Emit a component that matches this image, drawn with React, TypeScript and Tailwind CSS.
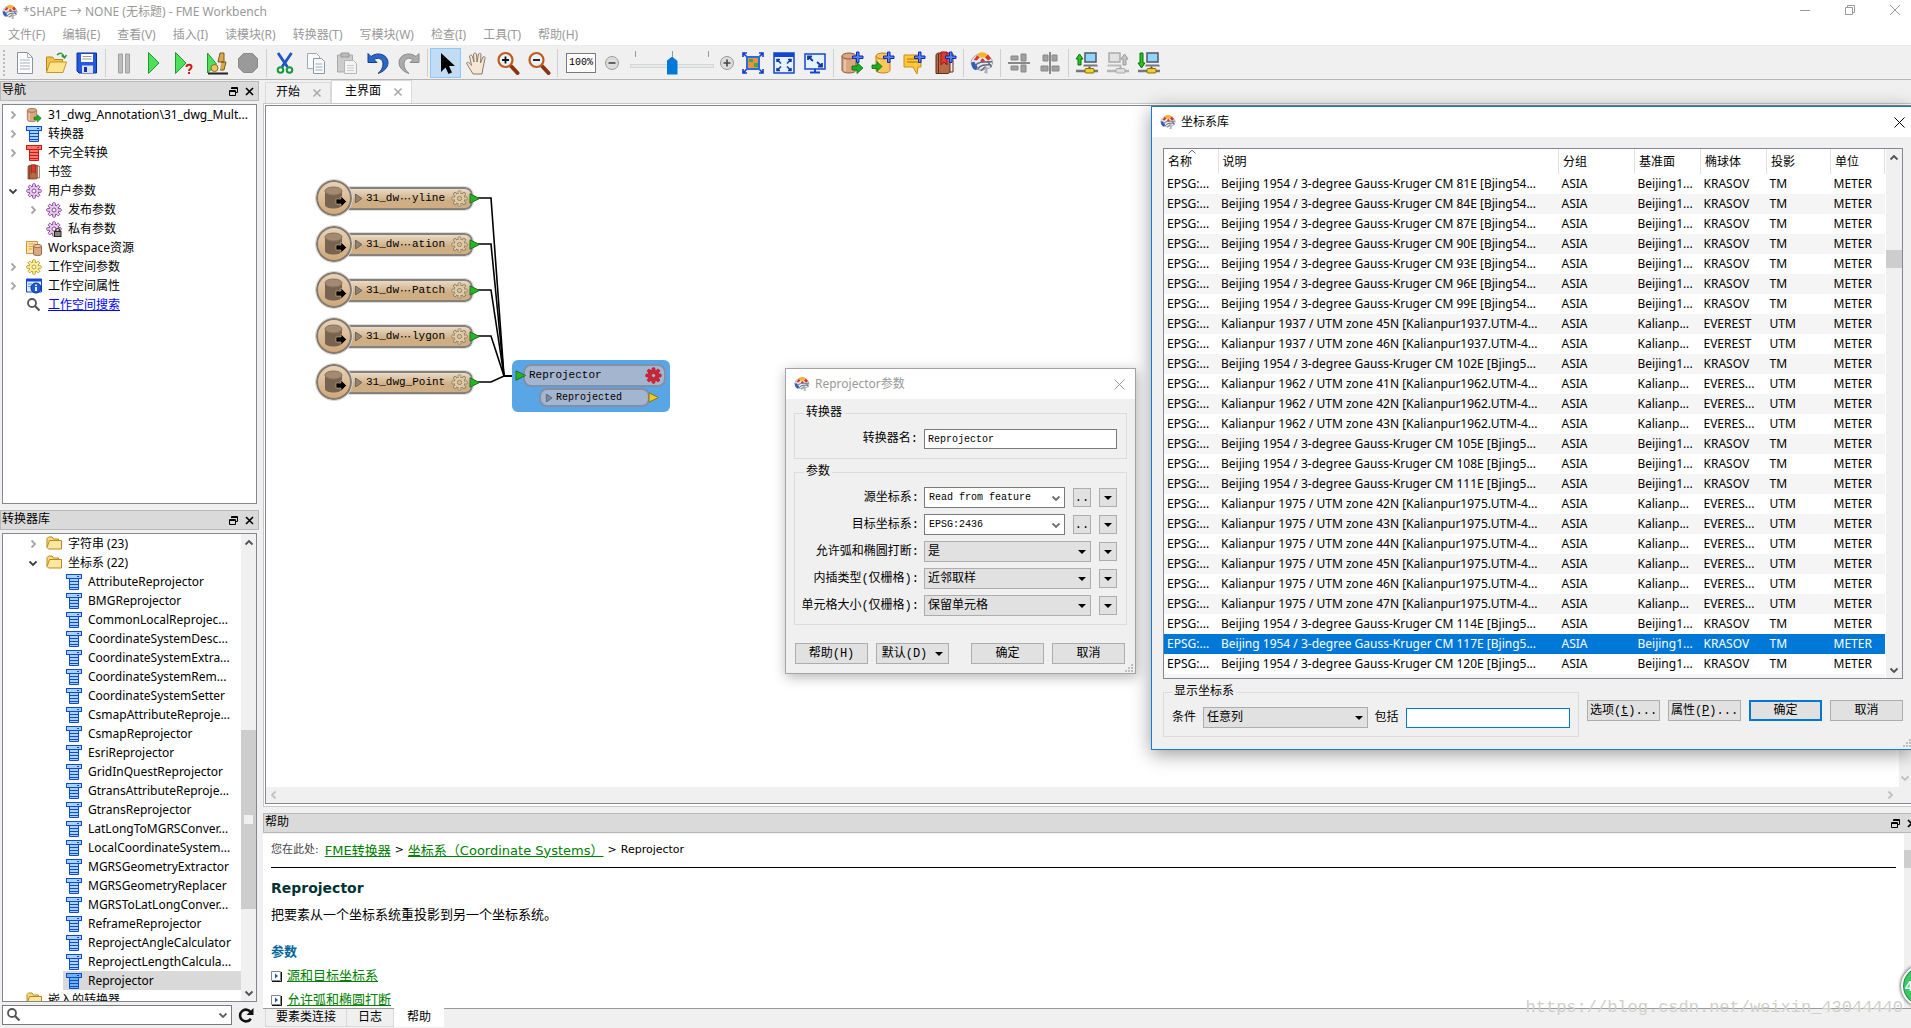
import type { ReactNode } from "react";
import clsx from "clsx";

const UI = "font-['Noto_Sans','Noto_Sans_CJK_SC',sans-serif]";
const SONG = "font-['Liberation_Mono','Noto_Sans_CJK_SC',monospace]";

/* ---------- icons ---------- */

interface SvgProps {
	size?: number;
	box?: number;
	children: ReactNode;
}

function Svg({ size = 24, box = 24, children }: SvgProps) {
	return (
		<svg
			width={size}
			height={size}
			viewBox={`0 0 ${box} ${box}`}
			fill="none"
			className="shrink-0"
			aria-hidden="true"
		>
			{children}
		</svg>
	);
}

function Logo({ size = 16 }: { size?: number }) {
	return (
		<Svg size={size} box={20}>
			<path d="M1 10C1 6 4 3 10 2C15 2.500 18.500 6 19 10L17 14L10 16L3 15Z" fill="#e6e9f1" stroke="#9a9ead" strokeWidth=".8" />
			<path d="M6 3C8 .5 12 .5 14.500 3L12.500 5.500H8Z" fill="#f5b52a" />
			<path d="M3 7.500L6 3.500L8 5.500L5.500 8Z" fill="#e03020" />
			<path d="M12.500 5.500L15 3L17.500 6.500L15 8Z" fill="#e03020" />
			<path d="M8.500 8L10.500 6L12.500 8L10.500 9.500Z" fill="#e03020" />
			<path d="M1 9.500C1 13 2.500 15 5 16L6.500 13.500L3.500 9Z" fill="#2c5fc4" />
			<path d="M4 12.500C7 8.500 11 9 18.500 9M6.500 15C9 11 13 11.500 17.500 11.500M9 16.500L13 13M15 9L18 13.500" stroke="#646878" strokeWidth="1.200" />
			<path d="M12 12.500L14.500 13.500V19L11.500 18L13 16Z" fill="#a9acb8" />
		</Svg>
	);
}

function Chevron({ dir, color = "#a6a6a6" }: { dir: "up" | "down" | "left" | "right"; color?: string }) {
	const d = {
		right: "M3.500 1.500L7 5L3.500 8.500",
		left: "M6.500 1.500L3 5L6.500 8.500",
		down: "M1.500 3.500L5 7L8.500 3.500",
		up: "M1.500 6.500L5 3L8.500 6.500",
	}[dir];
	return (
		<Svg size={10} box={10}>
			<path d={d} stroke={color} strokeWidth="1.800" />
		</Svg>
	);
}

interface GearProps {
	size?: number;
	fill: string;
	stroke: string;
	hole?: string;
	lock?: boolean;
}

function Gear({ size = 16, fill, stroke, hole = "#fff", lock }: GearProps) {
	return (
		<Svg size={size} box={16}>
			{[0, 45, 90, 135].map((a) => (
				<rect key={a} x="6.700" y=".8" width="2.600" height="14.400" rx=".6" fill={fill} stroke={stroke} strokeWidth=".9" transform={`rotate(${a} 8 8)`} />
			))}
			<circle cx="8" cy="8" r="5" fill={fill} stroke={stroke} strokeWidth=".9" />
			{[0, 45, 90, 135].map((a) => (
				<rect key={a} x="7.200" y="1.500" width="1.600" height="13" fill={fill} transform={`rotate(${a} 8 8)`} />
			))}
			<circle cx="8" cy="8" r="2" fill={hole} stroke={stroke} strokeWidth=".9" />
			{lock && (
				<>
					<path d="M9.800 11V9.500a2 2 0 0 1 4 0V11" stroke="#333" strokeWidth="1.200" />
					<rect x="8.500" y="10.500" width="6.500" height="5" fill="#8a8a70" stroke="#222" />
				</>
			)}
		</Svg>
	);
}

function TransformerIcon({ red, dim }: { red?: boolean; dim?: boolean }) {
	const line = red ? "#d3160c" : "#0a48e0";
	const fill = red ? "#f47a70" : dim ? "#6cb4ea" : "#a8d4fb";
	return (
		<Svg size={16} box={16}>
			<rect x=".5" y=".5" width="15" height="4" fill={fill} stroke={line} />
			<path d="M11 2.500h2" stroke={line} />
			<path d="M3.500 5v10.500h9V5" fill={fill} stroke={line} />
			<path d="M3 7.500h10M3 10.500h10M3 13.500h10" stroke={line} strokeWidth="1.200" />
		</Svg>
	);
}

function Folder() {
	return (
		<Svg size={16} box={16}>
			<path d="M1 11.500V2.500L2.500 1H6L7.500 3H12.500V5" fill="#f7dc86" stroke="#b98a1b" />
			<path d="M1 11.500L3.500 4.500H15.500V13H2.500Z" fill="#fbe7a0" stroke="#b98a1b" />
		</Svg>
	);
}

function Cylinder({ fill = "#d9a883", stroke = "#8a5a3c" }: { fill?: string; stroke?: string }) {
	return (
		<>
			<path d="M2 5v14c0 1.700 3 3 7 3s7-1.300 7-3V5" fill={fill} stroke={stroke} />
			<ellipse cx="9" cy="5" rx="7" ry="3" fill={fill} stroke={stroke} />
			<path d="M5 9v11" stroke="#fff" strokeOpacity=".35" strokeWidth="2" />
		</>
	);
}

const plus = <path d="M16.500 1h2.500v4h4v2.500h-4v4h-2.500v-4h-4V5h4z" fill="#5a86f0" stroke="#0a28b8" />;
const greenArrow = (
	<path d="M12 15h5v-3.500l6 5.500-6 5.500V19h-5z" fill="#1fae1f" stroke="#0c6b10" strokeWidth=".8" />
);

function Bookmark() {
	return (
		<>
			<path d="M3 3.500L5 2h12v19l-2 1.500H3Z" fill="#b56b45" stroke="#5f2d18" />
			<path d="M17 3h3v18h-3M5.500 3v19" stroke="#5f2d18" />
			<path d="M8 1h6v13l-3-3-3 3z" fill="#e03a30" stroke="#9a1510" />
		</>
	);
}

function Magnifier({ minus }: { minus?: boolean }) {
	return (
		<Svg>
			<path d="M15 15L21.500 22" stroke="#8a3510" strokeWidth="4" strokeLinecap="round" />
			<circle cx="9.500" cy="9" r="7" fill="#e8f3fc" stroke="#c05a20" strokeWidth="2.200" />
			<path d={minus ? "M6 9h7" : "M6 9h7M9.500 5.500v7"} stroke="#111" strokeWidth="1.800" />
		</Svg>
	);
}

const networkArrow = {
	up: "M3 14V8H1l3.500-5L8 8H6v6z",
	down: "M3 2v10H1l3.500 5L8 12H6V2z",
	gray: "M17 14V8h-2l3.500-5 3.500 5h-2v6z",
};

function Network({ kind }: { kind: "up" | "down" | "gray" }) {
	const gray = kind === "gray";
	return (
		<Svg>
			<g transform={gray ? "translate(-7 0)" : undefined}>
				<rect x="10" y="2" width="11" height="9" fill={gray ? "#e2e2e2" : "#8fd6ff"} stroke={gray ? "#aaa" : "#556"} strokeWidth="1.500" />
				<path d="M9 13.500h13l1 2H8z" fill={gray ? "#bbb" : "#778"} />
			</g>
			<path d="M14.500 15.500v3" stroke={gray ? "#aaa" : "#555"} strokeWidth="2" />
			<path d="M1 20h22" stroke={gray ? "#b5b5b5" : "#777"} strokeWidth="2.500" />
			<rect x="10" y="17.500" width="9" height="4.500" rx="1" fill={gray ? "#ddd" : "#f2cf30"} stroke={gray ? "#aaa" : "#8a6b00"} />
			<path d={networkArrow[kind]} fill={gray ? "#c5c5c5" : "#20c820"} stroke={gray ? "#999" : "#0a700a"} />
		</Svg>
	);
}

/* ---------- toolbar ---------- */

const playPath = "M1.500 1.500L12 12L1.500 22.500Z";

const fileTools: [string, ReactNode][] = [
	["新建", <Svg key="i"><path d="M4.500 1.500h10l5 5v16h-15z" fill="#fcfcfc" stroke="#8b949c" /><path d="M14.500 1.500v5h5M7 9h10M7 12h10M7 15h10M7 18h10" stroke="#a9b4bd" /></Svg>],
	["打开", <Svg key="i"><path d="M2.500 20V6h6l2 2.500h8V20z" fill="#f3c24a" stroke="#b9831a" /><path d="M2.500 21.500L6 11h16.500l-3.500 10.500z" fill="#fde48a" stroke="#c8952a" /><path d="M13 4c3-3 6-2 7 2m-2.500-1.500L20.500 7l2-3" stroke="#2a9a3a" strokeWidth="1.500" /></Svg>],
	["保存", <Svg key="i"><path d="M2 2h19.500v20H4l-2-2z" fill="#2458e0" stroke="#0a2ca0" /><path d="M6 3h12v8H6z" fill="#fff" /><path d="M7.500 5.500h9M7.500 8h9" stroke="#999" /><path d="M7 14.500h11V22H7z" fill="#dde3ee" /><path d="M9 16h3v5H9z" fill="#1238a8" /></Svg>],
];

const runTools: [string, ReactNode][] = [
	["暂停", <Svg key="i"><path d="M6.500 3h4v19h-4zM13.500 3h4v19h-4z" fill="#bdbdbd" stroke="#a0a0a0" /></Svg>],
	["运行", <Svg key="i"><path d={playPath} transform="translate(4 0)" fill="#4fe05a" stroke="#1c9b30" /></Svg>],
	["提示运行", <Svg key="i"><path d={playPath} fill="#4fe05a" stroke="#1c9b30" /><path d="M12.500 16c0-3 5-3 5 0 0 2-2.500 2-2.500 4M15 21v2" stroke="#d01818" strokeWidth="2" /></Svg>],
	["检查运行", <Svg key="i"><path d="M2.500 2v20l9-9z" fill="#4fe05a" stroke="#1c9b30" /><path d="M15 2h4v9h-6zM16 11h5l-2 8h-4" fill="#d8a94f" stroke="#7a5a1c" /><circle cx="9.500" cy="17" r="3.500" fill="#e8c860" stroke="#8a6a20" /><path d="M3 22.500h20" stroke="#222" strokeWidth="2" /></Svg>],
	["停止", <Svg key="i"><path d="M7.500 2.500h9l5 5v9l-5 5h-9l-5-5v-9z" fill="#9a9a9a" stroke="#8a8a8a" /></Svg>],
];

const editTools: [string, ReactNode][] = [
	["剪切", <Svg key="i"><path d="M5 2l9.500 14M18.500 2L9 16" stroke="#1c56c8" strokeWidth="2.800" /><circle cx="7.500" cy="19" r="2.800" stroke="#159a3a" strokeWidth="2" /><circle cx="16.500" cy="19" r="2.800" stroke="#159a3a" strokeWidth="2" /></Svg>],
	["复制", <Svg key="i"><path d="M3.500 2.500h9l3 3v12h-12z" fill="#fafafa" stroke="#9ab" /><path d="M9.500 7.500h8l3 3v12h-11z" fill="#fafafa" stroke="#89a" /><path d="M11.500 13h7M11.500 16h7M11.500 19h7" stroke="#9ab" /></Svg>],
	["粘贴", <Svg key="i"><path d="M2.500 4h15v17h-15z" fill="#ccc" stroke="#aaa" /><path d="M6 2h8v4H6z" fill="#bbb" stroke="#999" /><path d="M9.500 9.500h9l3 3v10h-12z" fill="#f4f4f4" stroke="#b5b5b5" /><path d="M12 14.500h7M12 17h7M12 19.500h7" stroke="#ccc" /></Svg>],
	["撤销", <Svg key="i"><path d="M2 2.500v9h9L8 8.500c4-2.500 9-1 9 4.500 0 4-2 7-5 9.500 6-2 10-6 10-11C22 4 12 0 5 5.500z" fill="#2868c8" stroke="#173f8a" /></Svg>],
	["重做", <Svg key="i"><path d="M22 2.500v9h-9l3-3c-4-2.500-9-1-9 4.500 0 4 2 7 5 9.500-6-2-10-6-10-11C2 4 12 0 19 5.500z" fill="#ababab" stroke="#8a8a8a" /></Svg>],
];

const insertTools: [string, ReactNode][] = [
	["添加读模块", <Svg key="i"><Cylinder />{plus}{greenArrow}</Svg>],
	["添加写模块", <Svg key="i"><g transform="translate(3 0)"><Cylinder fill="#fdc65a" stroke="#c08018" /></g>{plus}<path d="M1 14h5v-3.500l5 5-5 5V17.500H1z" fill="#1fae1f" stroke="#0c6b10" strokeWidth=".8" /></Svg>],
	["添加注释", <Svg key="i"><path d="M2 4h17v12h-3l-1 7-4-7H2z" fill="#fcc83a" stroke="#d08a18" /><path d="M5 8h11M5 11h11" stroke="#a87010" />{plus}</Svg>],
	["添加书签", <Svg key="i"><Bookmark />{plus}</Svg>],
];

const arrowsOut = "M2 6V2h4M2 2l4.500 4.500M22 6V2h-4M22 2l-4.500 4.500M2 18v4h4M2 22l4.500-4.500M22 18v4h-4M22 22l-4.500-4.500";

function ToolButton({ label, active, children }: { label: string; active?: boolean; children: ReactNode }) {
	return (
		<button
			type="button"
			aria-label={label}
			className={clsx(
				"flex h-[30px] w-[31px] shrink-0 items-center justify-center",
				active && "border border-[#90c8f6] bg-[#c2ddf3]",
			)}
		>
			{children}
		</button>
	);
}

function ToolGroup({ tools }: { tools: [string, ReactNode][] }) {
	return tools.map(([label, icon]) => (
		<ToolButton key={label} label={label}>
			{icon}
		</ToolButton>
	));
}

function Separator() {
	return (
		<div className="flex w-[6px] shrink-0 justify-center">
			<div className="h-7 w-px bg-[#cfcfcf]" />
		</div>
	);
}

function Toolbar() {
	return (
		<div className="flex h-[35px] shrink-0 items-center border-t border-b border-t-[#ececec] border-b-[#b5b5b5] bg-[#f0f0f0] pl-[3px]">
			<div className="mr-[3px] h-[26px] w-[3px] border-l-2 border-dotted border-[#bbb]" />
			<ToolGroup tools={fileTools} />
			<Separator />
			<ToolGroup tools={runTools} />
			<Separator />
			<ToolGroup tools={editTools} />
			<Separator />
			<ToolButton label="选择" active>
				<Svg>
					<path d="M7 2v19l4.500-4.500L14.500 23l3.500-1.500-3-6.500h6z" fill="#000" />
				</Svg>
			</ToolButton>
			<ToolButton label="平移">
				<Svg>
					<path
						d="M8 23C5 18 3 15 1.500 12c1.500-1.500 3-.5 5 2.500L4.500 5c1-1.500 2.500-1 3 .5L9 11 8.500 3c1-1.500 2.500-1 3 0l.5 8 1.500-8c1-1 2.500-1 2.500.5L15.500 12 18 6c1-1 2.500 0 2 1.500L18 17l-1 6z"
						fill="#f7e6d4"
						stroke="#8c7a6a"
					/>
				</Svg>
			</ToolButton>
			<ToolButton label="放大">
				<Magnifier />
			</ToolButton>
			<ToolButton label="缩小">
				<Magnifier minus />
			</ToolButton>
			<Separator />
			<input
				aria-label="缩放比例"
				defaultValue="100%"
				className={clsx("ml-[6px] h-5 w-[30px] shrink-0 border border-[#7a7a7a] bg-white text-center text-[10px] outline-none", SONG)}
			/>
			<ToolButton label="减">
				<Svg size={16} box={16}>
					<circle cx="8" cy="8" r="6.500" fill="#ddd" stroke="#999" />
					<path d="M4.500 8h7" stroke="#444" strokeWidth="1.600" />
				</Svg>
			</ToolButton>
			<div className="flex w-[90px] shrink-0 flex-col">
				<div className="flex h-[6px] justify-between px-2">
					<i className="w-px bg-[#999]" />
					<i className="w-px bg-[#999]" />
					<i className="w-px bg-[#999]" />
				</div>
				<input
					type="range"
					aria-label="缩放"
					defaultValue={50}
					className="mx-[3px] h-[18px] appearance-none bg-transparent [&::-webkit-slider-runnable-track]:h-[4px] [&::-webkit-slider-runnable-track]:border [&::-webkit-slider-runnable-track]:border-[#d6d6d6] [&::-webkit-slider-runnable-track]:bg-[#e7eaea] [&::-webkit-slider-thumb]:-mt-2 [&::-webkit-slider-thumb]:h-[18px] [&::-webkit-slider-thumb]:w-[11px] [&::-webkit-slider-thumb]:appearance-none [&::-webkit-slider-thumb]:bg-[#0078d7] [&::-webkit-slider-thumb]:[clip-path:polygon(50%_0,100%_25%,100%_100%,0_100%,0_25%)]"
				/>
			</div>
			<button type="button" aria-label="加" className="flex w-5 shrink-0 justify-center">
				<Svg size={16} box={16}>
					<circle cx="8" cy="8" r="6.500" fill="#ddd" stroke="#999" />
					<path d="M4.500 8h7M8 4.500v7" stroke="#444" strokeWidth="1.600" />
				</Svg>
			</button>
			<ToolButton label="缩放到选择">
				<Svg>
					<path d={arrowsOut} stroke="#1238c8" strokeWidth="1.600" />
					<path d="M6 6h12v12H6z" fill="#e8943a" stroke="#2a6ae0" strokeWidth="2" />
					<path d="M8 8h4v3H8zM13 12h4v4h-4z" fill="#3aa85a" />
				</Svg>
			</ToolButton>
			<ToolButton label="缩放到范围">
				<Svg>
					<path d="M2 2h20v20H2z" fill="#e4f2fd" stroke="#1444d0" strokeWidth="1.500" />
					<path d="M2 2h20v4H2z" fill="#1444d0" />
					<path d="M5 11V8.500h3M5 8.500l4 4M19 11V8.500h-3M19 8.500l-4 4M5 17v2.500h3M5 19.500l4-4M19 17v2.500h-3M19 19.500l-4-4" stroke="#1238a0" strokeWidth="1.500" />
				</Svg>
			</ToolButton>
			<ToolButton label="全屏">
				<Svg>
					<path d="M2 3h20v15H2z" fill="#e4f2fd" stroke="#1444d0" strokeWidth="1.500" />
					<path d="M5 9V5.500h4M5 5.500l5 4.500M19 12v3.500h-4M19 15.500L14 11" stroke="#1238a0" strokeWidth="1.800" />
					<path d="M12 18v3M7 21.500h10" stroke="#1444d0" strokeWidth="2" />
				</Svg>
			</ToolButton>
			<Separator />
			<ToolGroup tools={insertTools} />
			<Separator />
			<ToolButton label="FME">
				<Logo size={24} />
			</ToolButton>
			<Separator />
			<ToolButton label="水平对齐">
				<Svg>
					<path d="M4 5h7v4H4zM14 3h5v7h-5zM4 15h7v4H4zM14 14h5v7h-5z" fill="#a0a0a0" stroke="#888" />
					<path d="M1 12h22" stroke="#666" strokeWidth="1.500" />
				</Svg>
			</ToolButton>
			<ToolButton label="垂直对齐">
				<Svg>
					<path d="M5 4h5v6H5zM14 4h5v6h-5zM3 15h7v5H3zM14 15h7v5h-7z" fill="#a0a0a0" stroke="#888" />
					<path d="M12 1v22" stroke="#666" strokeWidth="1.500" />
				</Svg>
			</ToolButton>
			<Separator />
			<ToolButton label="发布">
				<Network kind="up" />
			</ToolButton>
			<ToolButton label="重新发布">
				<Network kind="gray" />
			</ToolButton>
			<ToolButton label="下载">
				<Network kind="down" />
			</ToolButton>
		</div>
	);
}

/* ---------- docks ---------- */

function DockHeader({ title }: { title: string }) {
	return (
		<div className="flex h-5 shrink-0 items-center border border-[#b9b9b9] bg-[#dadada] pl-px text-xs text-black">
			<h2 className="flex-1">{title}</h2>
			<button type="button" aria-label="浮动" className="mr-[7px]">
				<Svg size={9} box={9}>
					<path d="M2.500 2V.5h6v5H7M.5 3.500h6v5h-6zM.5 4.500h6M2.500 1.500h6" stroke="#000" />
				</Svg>
			</button>
			<button type="button" aria-label="关闭" className="mr-1">
				<Svg size={9} box={9}>
					<path d="M1 1l7 7M8 1L1 8" stroke="#000" strokeWidth="1.600" />
				</Svg>
			</button>
		</div>
	);
}

interface TreeItem {
	label: string;
	icon: ReactNode;
	level?: 0 | 1 | 2;
	arrow?: "right" | "down";
	link?: boolean;
	selected?: boolean;
}

const indent = ["pl-0", "pl-5", "pl-10"];

function TreeRow({ label, icon, level = 0, arrow, link, selected }: TreeItem) {
	return (
		<li className={clsx("flex h-[19px] shrink-0 items-center whitespace-nowrap", indent[level])}>
			<span className="flex w-5 shrink-0 justify-center">
				{arrow && <Chevron dir={arrow} color={arrow === "down" ? "#404040" : "#a6a6a6"} />}
			</span>
			<span className={clsx("flex h-full min-w-0 flex-1 items-center gap-[6px] pl-[3px]", selected && "bg-[#d9d9d9]")}>
				{icon}
				{link ? (
					<a href="#search" className="text-[#0000ff] underline">
						{label}
					</a>
				) : (
					<span>{label}</span>
				)}
			</span>
		</li>
	);
}

const navItems: TreeItem[] = [
	{ label: "31_dwg_Annotation\\31_dwg_Mult...", arrow: "right", icon: <Svg size={16}><Cylinder />{greenArrow}</Svg> },
	{ label: "转换器", arrow: "right", icon: <TransformerIcon /> },
	{ label: "不完全转换", arrow: "right", icon: <TransformerIcon red /> },
	{ label: "书签", icon: <Svg size={16}><Bookmark /></Svg> },
	{ label: "用户参数", arrow: "down", icon: <Gear fill="#e8c8f0" stroke="#7a3a8a" /> },
	{ label: "发布参数", level: 1, arrow: "right", icon: <Gear fill="#e8c8f0" stroke="#7a3a8a" /> },
	{ label: "私有参数", level: 1, icon: <Gear fill="#e8c8f0" stroke="#7a3a8a" lock /> },
	{
		label: "Workspace资源",
		icon: (
			<Svg size={16} box={16}>
				<path d="M.5 1.500h11v12H.5z" fill="#fbe3a8" stroke="#d89030" />
				<path d="M2.500 4h7M2.500 6.500h7M2.500 9h4" stroke="#d8a850" />
				<path d="M7.500 6v8c0 2 8 2 8 0V6" fill="#d9a883" stroke="#9a6a4c" />
				<ellipse cx="11.500" cy="6" rx="4" ry="1.600" fill="#ecc8ac" stroke="#9a6a4c" />
			</Svg>
		),
	},
	{ label: "工作空间参数", arrow: "right", icon: <Gear fill="#fbf0a0" stroke="#b59610" /> },
	{
		label: "工作空间属性",
		arrow: "right",
		icon: (
			<Svg size={16} box={16}>
				<path d="M.5 1h15v13H.5z" fill="#dcefff" stroke="#1444d0" />
				<path d="M0 1h16v2.500H0z" fill="#1444d0" />
				<path d="M2 6h4M2 8.500h3" stroke="#5a90e0" />
				<circle cx="10" cy="10" r="5" fill="#1c5ad8" stroke="#0a2c90" />
				<path d="M10 6.500v1.500M10 9v4" stroke="#fff" strokeWidth="1.800" />
			</Svg>
		),
	},
	{ label: "工作空间搜索", link: true, icon: <SearchGlyph /> },
];

function SearchGlyph() {
	return (
		<Svg size={16} box={16}>
			<circle cx="6" cy="6" r="4" stroke="#555" strokeWidth="1.800" />
			<path d="M9 9l4.500 4.500" stroke="#555" strokeWidth="2.200" />
		</Svg>
	);
}

const transformers = [
	"AttributeReprojector",
	"BMGReprojector",
	"CommonLocalReprojec...",
	"CoordinateSystemDesc...",
	"CoordinateSystemExtra...",
	"CoordinateSystemRem...",
	"CoordinateSystemSetter",
	"CsmapAttributeReproje...",
	"CsmapReprojector",
	"EsriReprojector",
	"GridInQuestReprojector",
	"GtransAttributeReproje...",
	"GtransReprojector",
	"LatLongToMGRSConver...",
	"LocalCoordinateSystem...",
	"MGRSGeometryExtractor",
	"MGRSGeometryReplacer",
	"MGRSToLatLongConver...",
	"ReframeReprojector",
	"ReprojectAngleCalculator",
	"ReprojectLengthCalcula...",
	"Reprojector",
];

function LeftColumn() {
	return (
		<aside className="flex w-[259px] shrink-0 flex-col pt-px pb-[3px]">
			<DockHeader title="导航" />
			<ul className={clsx("mt-[3px] mr-[2px] ml-[2px] flex h-[400px] shrink-0 flex-col border border-[#828790] bg-white text-[12px]", UI)}>
				{navItems.map((item) => (
					<TreeRow key={item.label} {...item} />
				))}
			</ul>
			<div className="h-[6px] shrink-0" />
			<DockHeader title="转换器库" />
			<div className={clsx("mx-[2px] mt-[3px] flex min-h-0 flex-1 border border-[#828790] bg-white text-[12px]", UI)}>
				<ul className="flex min-w-0 flex-1 flex-col overflow-hidden">
					<TreeRow label="字符串 (23)" level={1} arrow="right" icon={<Folder />} />
					<TreeRow label="坐标系 (22)" level={1} arrow="down" icon={<Folder />} />
					{transformers.map((name) => (
						<TreeRow
							key={name}
							label={name}
							level={2}
							icon={<TransformerIcon dim={name === "Reprojector"} />}
							selected={name === "Reprojector"}
						/>
					))}
					<TreeRow label="嵌入的转换器" icon={<Folder />} />
				</ul>
				<div className="flex w-[15px] shrink-0 flex-col items-center bg-[#f0f0f0]">
					<span className="flex h-[17px] items-center">
						<Chevron dir="up" color="#505050" />
					</span>
					<div className="h-[179px]" />
					<div className="flex h-[179px] w-full items-center justify-center bg-[#cdcdcd]">
						<div className="size-[9px] bg-[#f0f0f0]" />
					</div>
					<div className="flex-1" />
					<span className="flex h-[17px] items-center">
						<Chevron dir="down" color="#505050" />
					</span>
				</div>
			</div>
			<div className="mt-[3px] ml-[2px] flex items-center gap-[5px]">
				<div className="flex h-5 w-[230px] items-center border border-[#7a7a7a] bg-white px-[3px]">
					<SearchGlyph />
					<input aria-label="搜索转换器" className="h-full min-w-0 flex-1 bg-transparent text-xs outline-none" />
					<Chevron dir="down" color="#606060" />
				</div>
				<button type="button" aria-label="刷新">
					<Svg size={17} box={16}>
						<path d="M13 11a5.500 5.500 0 1 1 0-6" stroke="#111" strokeWidth="2.400" />
						<path d="M15.500 1v6.500H9z" fill="#111" />
					</Svg>
				</button>
			</div>
		</aside>
	);
}

/* ---------- canvas ---------- */

const readers = [
	{ head: "31_dw", tail: "yline", top: "top-[74px]", y: 92 },
	{ head: "31_dw", tail: "ation", top: "top-[120px]", y: 138 },
	{ head: "31_dw", tail: "Patch", top: "top-[166px]", y: 184 },
	{ head: "31_dw", tail: "lygon", top: "top-[212px]", y: 230 },
	{ head: "31_dwg_Point", tail: "", top: "top-[258px]", y: 276 },
];

function Port({ yellow }: { yellow?: boolean }) {
	return (
		<Svg size={11} box={11}>
			<path d="M1 .8L10.500 5.500L1 10.200Z" fill={yellow ? "#f0c820" : "#22b822"} stroke={yellow ? "#8a7418" : "#2a6a2a"} />
		</Svg>
	);
}

function ReaderNode({ head, tail, top }: { head: string; tail: string; top: string }) {
	return (
		<div className={clsx("absolute left-[50px] flex items-center", top)}>
			<div className="z-10 flex size-9 items-center justify-center rounded-full border-2 border-[#84796d] bg-linear-to-b from-[#e8d2b8] to-[#d0a878] outline outline-[#d5d5d5]">
				<Svg size={26} box={26}>
					<path d="M4 6v14c0 2 4 3.500 8.500 3.500S21 22 21 20V6" fill="#786350" />
					<ellipse cx="12.500" cy="6" rx="8.500" ry="4" fill="#a38a72" stroke="#8a735e" />
					<path d="M15 14h5v-3l5.500 5.500L20 22v-3h-5z" fill="#000" stroke="#d8b890" strokeWidth=".6" />
				</Svg>
			</div>
			<div
				className={clsx(
					"-ml-1 flex h-[23px] w-[125px] items-center rounded-r-lg border-2 border-[#85827e] bg-linear-to-b from-[#eadac6] to-[#cfae84] to-60% pl-1 text-[11px] text-black outline outline-[#dcdcdc]",
					SONG,
				)}
			>
				<Svg size={9} box={9}>
					<path d="M1.500 0L8 4.500L1.500 9Z" fill="#8f8270" stroke="#6f6558" />
				</Svg>
				<span className="ml-[3px] flex w-[83px] whitespace-nowrap">
					{head}
					{tail && <span className="w-[13px] text-center font-['Noto_Sans_CJK_SC',sans-serif]">⋯</span>}
					{tail}
				</span>
				<span className="ml-[2px] shrink-0">
					<Gear size={17} fill="#e2cba8" stroke="#8f8068" hole="#dcc098" />
				</span>
			</div>
			<div className="z-10 -ml-1">
				<Port />
			</div>
		</div>
	);
}

function Canvas() {
	return (
		<div className="flex min-h-0 flex-1 flex-col border border-r-0 border-[#c8c8c8] bg-white pt-px pb-[2px] pl-px">
			<div className="flex min-h-0 flex-1 flex-col border border-r-0 border-[#828790]">
				<div className="flex min-h-0 flex-1">
					<div className="relative min-w-0 flex-1 overflow-hidden bg-white">
						<svg width="300" height="320" className="absolute top-0 left-0" fill="none" aria-hidden="true">
							{readers.map((r) => (
								<path key={r.y} d={`M212 ${r.y}H225L238 270H252`} stroke="#000" strokeWidth="1.600" />
							))}
						</svg>
						{readers.map((r) => (
							<ReaderNode key={r.y} head={r.head} tail={r.tail} top={r.top} />
						))}
						<div
							className={clsx(
								"absolute top-[254px] left-[246px] flex w-[158px] flex-col items-end gap-px rounded-md bg-[#58a6e6] pt-1 pr-1 pb-[5px]",
								SONG,
							)}
						>
							<div className="flex h-[23px] w-[143px] items-center justify-between rounded-lg border-2 border-[#8090a8] bg-[#a3b5cf] pr-[2px] pl-[3px] text-[11px] text-black">
								<span className="-ml-[13px]">
									<Port />
								</span>
								<span className="flex-1 pl-[3px]">Reprojector</span>
								<Gear size={17} fill="#c82838" stroke="#c02030" hole="#a3b5cf" />
							</div>
							<div className="mr-4 flex h-[19px] w-[111px] items-center rounded-lg border-2 border-[#8090a8] bg-[#a3b5cf] pl-1 text-[10px] text-black">
								<Svg size={8} box={9}>
									<path d="M1.500 0L8 4.500L1.500 9Z" fill="#75859c" stroke="#5a6a80" />
								</Svg>
								<span className="ml-[3px] flex-1">Reprojected</span>
								<span className="-mr-[11px]">
									<Port yellow />
								</span>
							</div>
						</div>
					</div>
					<div className="flex w-3 shrink-0 flex-col items-center justify-end bg-[#f0f0f0] pb-1">
						<Chevron dir="down" color="#c0c0c0" />
					</div>
				</div>
				<div className="flex h-4 shrink-0 items-center justify-between bg-[#f0f0f0] pr-4 pl-[3px]">
					<Chevron dir="left" color="#c0c0c0" />
					<Chevron dir="right" color="#c0c0c0" />
				</div>
			</div>
		</div>
	);
}

/* ---------- help ---------- */

function HelpBullet() {
	return (
		<Svg size={11} box={11}>
			<path d="M.5.5h9v9h-9z" fill="#fff" stroke="#888" />
			<path d="M10.500 1v9.500H1" stroke="#111" />
			<path d="M4 2.500v5L7 5z" fill="#0a5ad0" />
		</Svg>
	);
}

function HelpPanel() {
	return (
		<section className="mt-[6px] flex h-[215px] shrink-0 flex-col">
			<div className="-mr-[10px]">
				<DockHeader title="帮助" />
			</div>
			<div className="mt-px flex min-h-0 flex-1 bg-white font-['DejaVu_Sans','Noto_Sans_CJK_SC',sans-serif] text-black">
				<div className="min-w-0 flex-1 overflow-hidden pr-2 pl-2">
					<p className="flex h-[34px] items-center gap-1 border-b border-black text-[11px]">
						<span className="mr-[2px] text-[#444]">您在此处:</span>
						<a href="#fme" className="text-[13px] text-[#008000] underline">FME转换器</a>
						<span>&gt;</span>
						<a href="#coordinate-systems" className="text-[13px] text-[#008000] underline">坐标系（Coordinate Systems）</a>
						<span>&gt;</span>
						<span>Reprojector</span>
					</p>
					<h1 className="mt-[10px] text-[14px] leading-5 font-bold text-[#003333]">Reprojector</h1>
					<p className="mt-[7px] text-[13px] leading-5">把要素从一个坐标系统重投影到另一个坐标系统。</p>
					<h2 className="mt-[17px] text-[13px] leading-5 font-bold text-[#006699]">参数</h2>
					<ul className="mt-[2px] text-[13px] leading-6">
						<li className="flex items-center gap-[5px]">
							<HelpBullet />
							<a href="#source" className="text-[#008000] underline">源和目标坐标系</a>
						</li>
						<li className="flex items-center gap-[5px]">
							<HelpBullet />
							<a href="#arcs" className="text-[#008000] underline">允许弧和椭圆打断</a>
						</li>
					</ul>
				</div>
				<div className="w-[7px] shrink-0 bg-[#f0f0f0] pt-4">
					<div className="h-[18px] bg-[#cdcdcd]" />
				</div>
			</div>
			<div className="flex h-5 shrink-0 items-start border-t border-[#9a9a9a] pl-[2px] text-xs text-black">
				<button type="button" className="h-[18px] border border-t-0 border-[#d9d9d9] px-[10px]">要素类连接</button>
				<button type="button" className="h-[18px] border border-t-0 border-l-0 border-[#d9d9d9] px-[11px]">日志</button>
				<button type="button" className="-mt-px h-[19px] bg-white px-[13px]">帮助</button>
			</div>
		</section>
	);
}

function Tab({ label, active }: { label: string; active?: boolean }) {
	return (
		<div
			className={clsx(
				"flex items-center gap-3 border border-b-0 border-[#d9d9d9] text-xs text-black",
				active ? "h-[23px] bg-white pr-2 pl-[13px]" : "h-[21px] pr-2 pl-[10px]",
			)}
		>
			<button type="button">{label}</button>
			<button type="button" aria-label={`关闭${label}`}>
				<Svg size={10} box={10}>
					<path d="M1.500 1.500l7 7M8.500 1.500l-7 7" stroke="#aaa" strokeWidth="1.600" />
				</Svg>
			</button>
		</div>
	);
}

/* ---------- dialogs ---------- */

function DialogTitle({ title, muted }: { title: string; muted?: boolean }) {
	return (
		<div className={clsx("flex h-[30px] items-center bg-white pl-2", muted ? "pr-[10px]" : "pr-[6px]", UI)}>
			<Logo />
			<h2 className={clsx("ml-[5px] flex-1 text-xs", muted ? "text-[#999]" : "text-black")}>{title}</h2>
			<button type="button" aria-label="关闭">
				<Svg size={11} box={11}>
					<path d="M.5.5l10 10M10.500.5l-10 10" stroke={muted ? "#999" : "#000"} />
				</Svg>
			</button>
		</div>
	);
}

function Caret() {
	return (
		<Svg size={8} box={8}>
			<path d="M0 2h8L4 6z" fill="#000" />
		</Svg>
	);
}

function PushButton({ children, primary }: { children: ReactNode; primary?: boolean }) {
	return (
		<button
			type="button"
			className={clsx(
				"flex h-[21px] w-[73px] items-center justify-center gap-2 bg-[#e1e1e1] whitespace-nowrap",
				primary ? "border-2 border-[#0078d7]" : "border border-[#adadad]",
			)}
		>
			{children}
		</button>
	);
}

function Combo({ id, value, flat }: { id: string; value: string; flat?: boolean }) {
	return (
		<div className="relative flex h-[21px] min-w-0 flex-1">
			<select
				id={id}
				defaultValue={value}
				className={clsx(
					"w-full appearance-none border outline-none",
					flat ? "border-[#adadad] bg-[#e1e1e1] pl-[3px]" : "border-[#7a7a7a] bg-white pl-1 text-[10px]",
				)}
			>
				<option>{value}</option>
			</select>
			<span className="pointer-events-none absolute inset-y-0 right-1 flex items-center">
				{flat ? <span className="mr-px"><Caret /></span> : <Chevron dir="down" color="#707070" />}
			</span>
		</div>
	);
}

function SmallButton({ label, children }: { label: string; children: ReactNode }) {
	return (
		<button type="button" aria-label={label} className="flex h-[19px] w-[18px] shrink-0 items-center justify-center border border-[#adadad] bg-[#e1e1e1]">
			{children}
		</button>
	);
}

function Grip() {
	return (
		<Svg size={9} box={9}>
			<path d="M7 1h2M4 4h2M7 4h2M1 7h2M4 7h2M7 7h2" stroke="#bfbfbf" strokeWidth="2" />
		</Svg>
	);
}

const parameters = [
	{ id: "source-cs", label: "源坐标系:", value: "Read from feature", browse: true },
	{ id: "dest-cs", label: "目标坐标系:", value: "EPSG:2436", browse: true },
	{ id: "arcs", label: "允许弧和椭圆打断:", value: "是" },
	{ id: "interpolation", label: "内插类型(仅栅格):", value: "近邻取样" },
	{ id: "cell-size", label: "单元格大小(仅栅格):", value: "保留单元格" },
];

function ReprojectorDialog() {
	return (
		<div
			role="dialog"
			aria-label="Reprojector参数"
			className={clsx("absolute top-[368px] left-[785px] w-[351px] border border-[#a5a5a5] bg-[#f0f0f0] text-xs text-black shadow-[1px_3px_12px_rgba(0,0,0,0.3)]", SONG)}
		>
			<DialogTitle title="Reprojector参数" muted />
			<div className="px-2 pt-[5px]">
				<fieldset className="border border-[#dcdcdc] px-[9px] pb-2">
					<legend className="px-[2px] leading-[18px]">转换器</legend>
					<div className="mt-[6px] flex h-[22px] items-center">
						<label htmlFor="transformer-name" className="w-[120px] pr-[6px] text-right">转换器名:</label>
						<input
							id="transformer-name"
							defaultValue="Reprojector"
							className="h-5 min-w-0 flex-1 border border-[#7a7a7a] bg-white px-[3px] text-[10px] outline-none"
						/>
					</div>
				</fieldset>
				<fieldset className="mt-1 flex flex-col gap-[6px] border border-[#dcdcdc] px-[9px] pb-2">
					<legend className="px-[2px] leading-[18px]">参数</legend>
					{parameters.map((p) => (
						<div key={p.id} className="-ml-[9px] flex items-center gap-2 first-of-type:mt-[6px]">
							<label htmlFor={p.id} className="-mr-2 w-[129px] shrink-0 pr-[5px] text-right whitespace-nowrap">{p.label}</label>
							<Combo id={p.id} value={p.value} flat={!p.browse} />
							{p.browse && <SmallButton label="浏览">..</SmallButton>}
							<SmallButton label="选项">
								<Caret />
							</SmallButton>
						</div>
					))}
				</fieldset>
			</div>
			<div className="mt-[18px] flex gap-2 pr-[10px] pl-[9px]">
				<PushButton>帮助(H)</PushButton>
				<PushButton>
					默认(D)
					<Caret />
				</PushButton>
				<div className="flex-1" />
				<PushButton>确定</PushButton>
				<PushButton>取消</PushButton>
			</div>
			<div className="flex h-[9px] justify-end pr-[2px]">
				<Grip />
			</div>
		</div>
	);
}

const gauss = (zone: string) => ({
	desc: `Beijing 1954 / 3-degree Gauss-Kruger CM ${zone}E [${zone.length > 2 ? "Bjing5..." : "Bjing54..."}`,
	datum: "Beijing1...",
	ellipsoid: "KRASOV",
	projection: "TM",
});

const utm = (year: number, zone: number) => ({
	desc: `Kalianpur ${year} / UTM zone ${zone}N [Kalianpur${year}.UTM-4...`,
	datum: "Kalianp...",
	ellipsoid: year === 1937 ? "EVEREST" : "EVERES...",
	projection: "UTM",
});

const systems = [
	...["81", "84", "87", "90", "93", "96", "99"].map(gauss),
	utm(1937, 45),
	utm(1937, 46),
	gauss("102"),
	...[41, 42, 43].map((z) => utm(1962, z)),
	...["105", "108", "111"].map(gauss),
	...[42, 43, 44, 45, 46, 47].map((z) => utm(1975, z)),
	...["114", "117", "120"].map(gauss),
];

const SELECTED = 23;

function CoordinateDialog() {
	return (
		<div
			role="dialog"
			aria-label="坐标系库"
			className={clsx("absolute top-[106px] right-0 w-[760px] border border-r-0 border-[#1979ca] bg-[#f0f0f0] text-xs text-black shadow-[0_4px_18px_rgba(0,0,0,0.4)]", SONG)}
		>
			<DialogTitle title="坐标系库" />
			<div className={clsx("mt-[11px] mr-2 ml-[11px] flex border border-[#828790] bg-white", UI)}>
				<div className="min-w-0 flex-1">
					<table className="w-full table-fixed border-collapse text-left whitespace-nowrap">
						<colgroup>
							<col className="w-[54px]" />
							<col />
							<col className="w-[76px]" />
							<col className="w-[66px]" />
							<col className="w-[66px]" />
							<col className="w-[64px]" />
							<col className="w-[54px]" />
						</colgroup>
						<thead>
							<tr className="h-[25px]">
								{["名称", "说明", "分组", "基准面", "椭球体", "投影", "单位"].map((h, i) => (
									<th key={h} className="relative border-r border-[#e0e0e0] p-0 pl-1 font-normal">
										{i === 0 && (
											<svg width="8" height="5" className="absolute top-0 left-6" fill="none" aria-hidden="true">
												<path d="M.5 4.500L4 1L7.500 4.500" stroke="#666" />
											</svg>
										)}
										{h}
									</th>
								))}
							</tr>
						</thead>
						<tbody>
							{systems.map((s, i) => (
								<tr
									key={s.desc}
									className={clsx("h-5", i === SELECTED ? "bg-[#0078d7] text-white" : i % 2 === 1 && "bg-[#f5f5f5]")}
								>
									<td className="p-0 pl-[3px]">EPSG:...</td>
									<td className="p-0 pl-[3px]">{s.desc}</td>
									<td className="p-0 pl-[3px]">ASIA</td>
									<td className="p-0 pl-[3px]">{s.datum}</td>
									<td className="p-0 pl-[3px]">{s.ellipsoid}</td>
									<td className="p-0 pl-[3px]">{s.projection}</td>
									<td className="p-0 pl-[3px]">METER</td>
								</tr>
							))}
						</tbody>
					</table>
					<div className="h-1 bg-[#f5f5f5]" />
				</div>
				<div className="flex w-[17px] shrink-0 flex-col items-center border-l border-white bg-[#f0f0f0]">
					<span className="flex h-[17px] items-center">
						<Chevron dir="up" color="#505050" />
					</span>
					<div className="h-[84px]" />
					<div className="h-[18px] w-full bg-[#cdcdcd]" />
					<div className="flex-1" />
					<span className="flex h-[17px] items-center">
						<Chevron dir="down" color="#505050" />
					</span>
				</div>
			</div>
			<div className="mt-1 flex gap-2 pr-2 pl-[11px]">
				<fieldset className="mb-3 flex-1 border border-[#dcdcdc] px-2 pb-2">
					<legend className="px-[2px] leading-[18px]">显示坐标系</legend>
					<div className="mt-[6px] flex items-center gap-[7px]">
						<label htmlFor="condition">条件</label>
						<Combo id="condition" value="任意列" flat />
						<label htmlFor="contains">包括</label>
						<div className="flex min-w-0 flex-1">
							<input id="contains" className="h-5 w-full border border-[#0078d7] bg-white px-1 outline-none" />
						</div>
					</div>
				</fieldset>
				<div className="flex gap-2 pt-[17px]">
					<PushButton>
						<span>选项(<u>t</u>)...</span>
					</PushButton>
					<PushButton>
						<span>属性(<u>P</u>)...</span>
					</PushButton>
					<PushButton primary>确定</PushButton>
					<PushButton>取消</PushButton>
				</div>
			</div>
			<div className="absolute right-0 bottom-px">
				<Grip />
			</div>
		</div>
	);
}

/* ---------- window ---------- */

const menus = ["文件(F)", "编辑(E)", "查看(V)", "插入(I)", "读模块(R)", "转换器(T)", "写模块(W)", "检查(I)", "工具(T)", "帮助(H)"];

export default function App() {
	return (
		<div className={clsx("relative flex h-screen flex-col overflow-hidden bg-[#f0f0f0]", SONG)}>
			<header className={clsx("shrink-0 bg-white text-[#999]", UI)}>
				<div className="flex h-6 items-center pr-[11px] pl-[2px]">
					<Logo />
					<h1 className="ml-[5px] flex-1 text-xs">*SHAPE → NONE (无标题) - FME Workbench</h1>
					<div className="flex gap-[35px] pb-1">
						<button type="button" aria-label="最小化">
							<Svg size={10} box={10}>
								<path d="M0 5.500h10" stroke="#999" />
							</Svg>
						</button>
						<button type="button" aria-label="还原">
							<Svg size={10} box={10}>
								<path d="M.5 2.500h7v7h-7zM2.500 2V.5h7v7H8" stroke="#999" />
							</Svg>
						</button>
						<button type="button" aria-label="关闭">
							<Svg size={10} box={10}>
								<path d="M0 0l10 10M10 0L0 10" stroke="#999" />
							</Svg>
						</button>
					</div>
				</div>
				<nav className="flex h-[21px] items-center gap-[17px] pl-2 text-xs">
					{menus.map((m) => (
						<button key={m} type="button">
							{m}
						</button>
					))}
				</nav>
			</header>
			<Toolbar />
			<main className="flex min-h-0 flex-1 gap-1">
				<LeftColumn />
				<div className="flex min-w-0 flex-1 flex-col">
					<div className="flex h-[23px] shrink-0 items-end pl-[2px]">
						<Tab label="开始" />
						<Tab label="主界面" active />
					</div>
					<Canvas />
					<HelpPanel />
				</div>
			</main>
			<ReprojectorDialog />
			<CoordinateDialog />
			<p className="absolute right-2 bottom-2 text-[17px] leading-6 text-[#cfcfca]">https://blog.csdn.net/weixin_43044440</p>
			<button
				type="button"
				aria-label="加速"
				className="absolute -right-8 bottom-[21px] flex size-[42px] items-center rounded-full border-2 border-white bg-[#3cc85c] pl-[2px] font-['Liberation_Sans',sans-serif] text-sm font-bold text-white shadow-[0_0_3px_1px_#777] inset-ring inset-ring-[#1f8a4a]"
			>
				4
			</button>
		</div>
	);
}
